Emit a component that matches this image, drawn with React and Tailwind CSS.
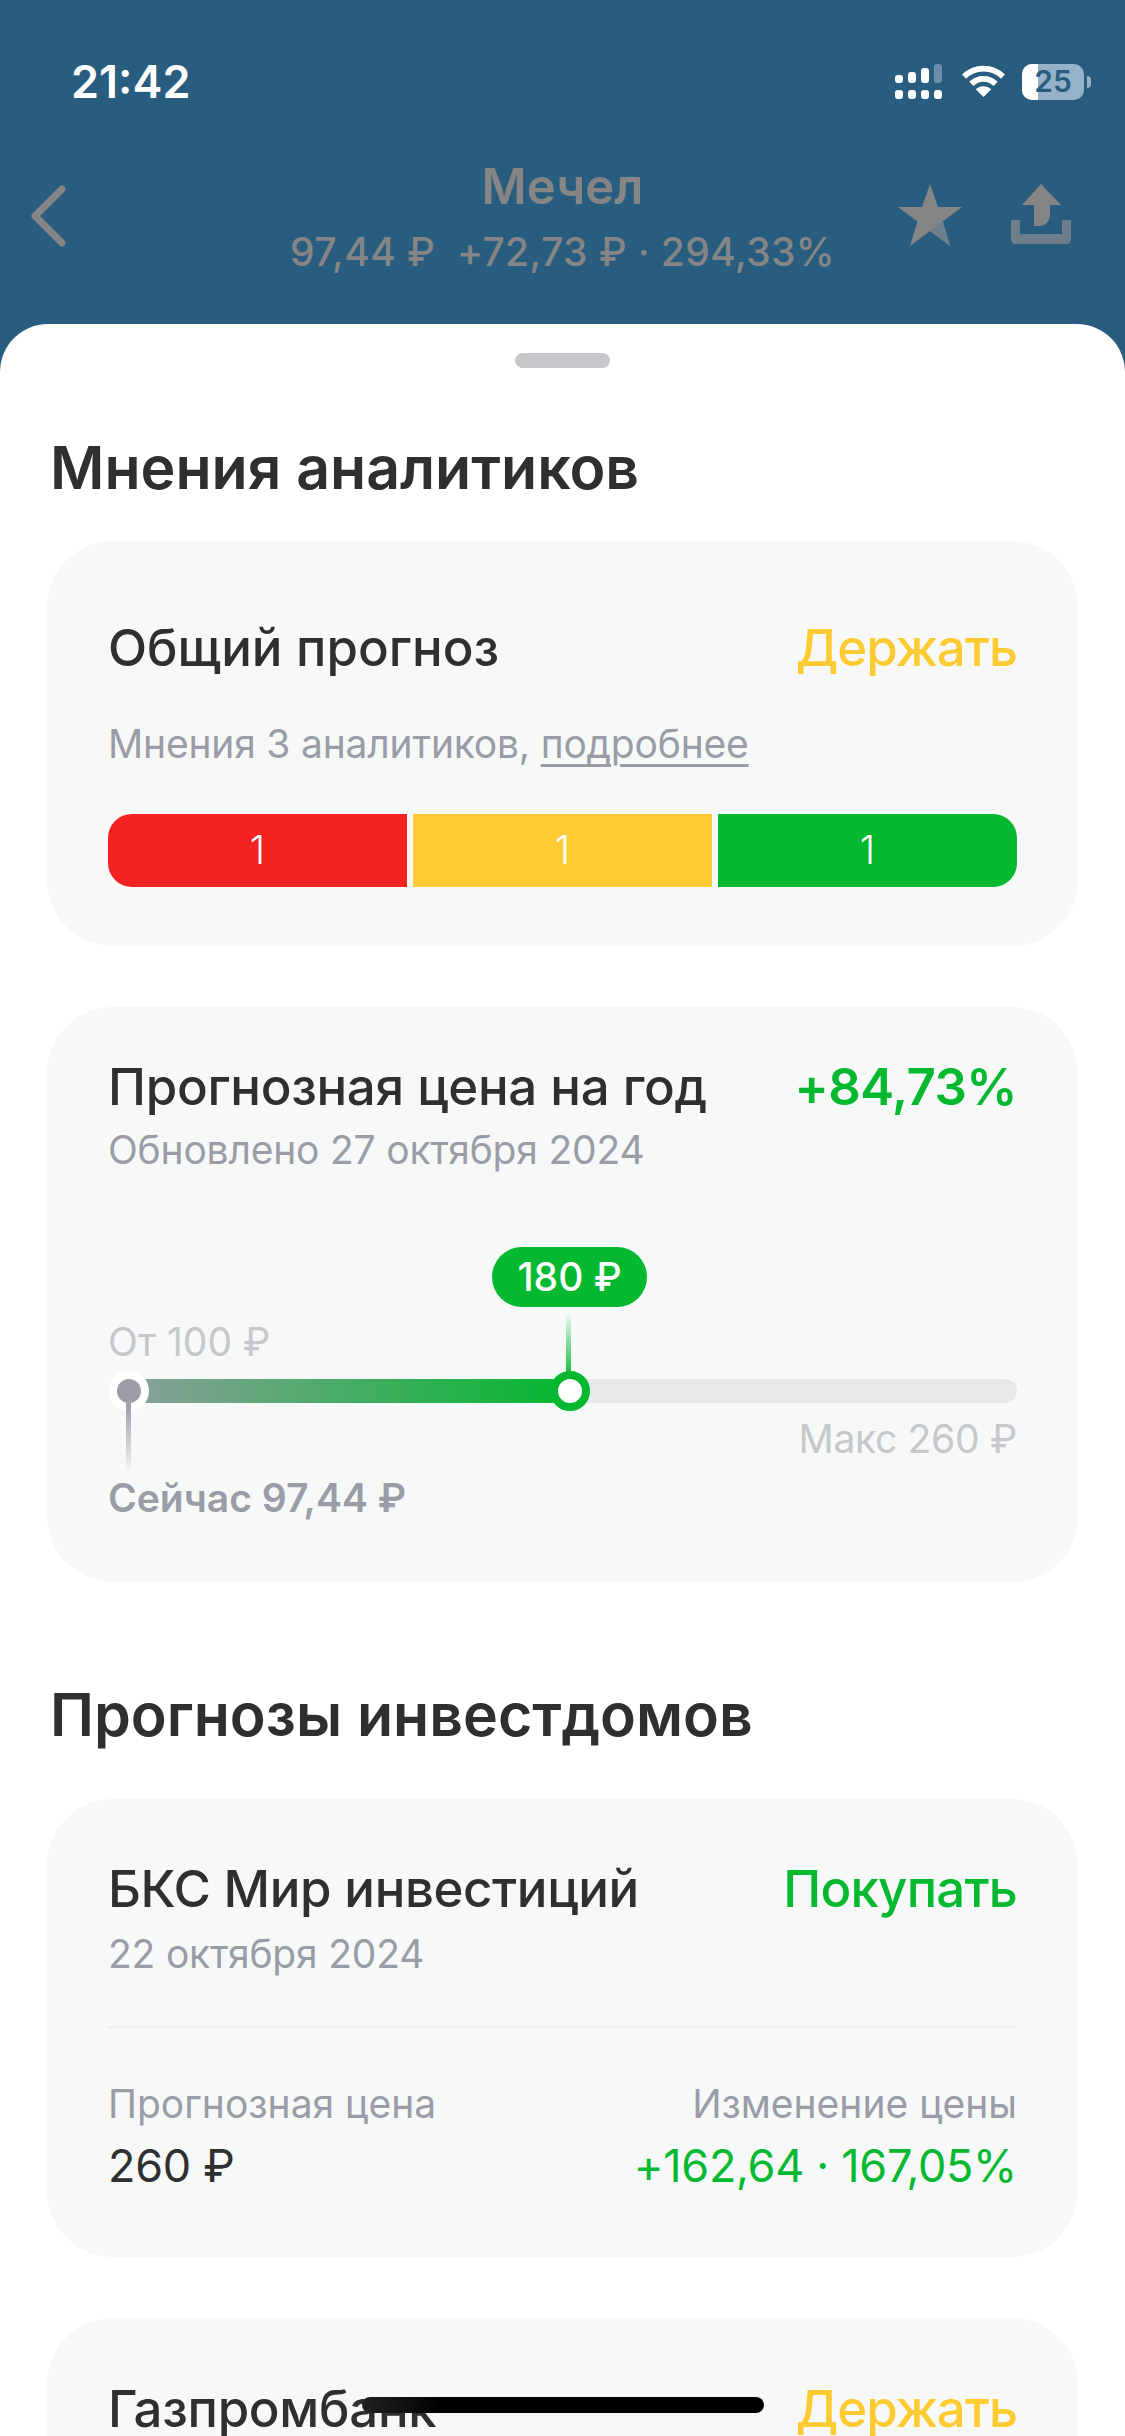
export default function App() {
  return (
    <div className="relative h-[2436px] w-[1125px] overflow-hidden bg-[#295d7f] font-['Inter',sans-serif] text-[#2f2f2f]">
      <StatusBar />
      <NavBar />
      <div className="h-[2112px] rounded-t-[48px] bg-white px-[47px]">
        <div className="flex justify-center pt-[29px]">
          <div className="h-[15px] w-[95px] rounded-full bg-[#c6c8cc]" />
        </div>
        <h1 className="mt-[67px] pl-[3px] text-[59px] leading-[66px] font-semibold">Мнения аналитиков</h1>
        <ForecastCard />
        <PriceCard />
        <h1 className="mt-[100px] pl-[3px] text-[59px] leading-[66px] font-semibold">Прогнозы инвестдомов</h1>
        <BrokerCard />
        <div className="mt-[61px] flex h-[300px] items-start justify-between rounded-[66px] bg-[#f7f9f9] pt-[62px] pr-[61px] pl-[61px] text-[51px] leading-[58px] font-medium tracking-[-0.3px]">
          <span>Газпромбанк</span>
          <span className="tracking-[-1px] text-[#ffcb33]">Держать</span>
        </div>
      </div>
      <div className="absolute top-[2397px] left-[362px] h-[16px] w-[402px] rounded-full bg-[linear-gradient(90deg,#222_0%,#000_20%)]" />
    </div>
  )
}

function StatusBar() {
  return (
    <div className="flex h-[135px] items-center justify-between pt-[28px] pr-[34px] pl-[71px] text-white">
      <span className="text-[45px] font-semibold">21:42</span>
      <div className="flex items-center">
        <svg width="47" height="35" viewBox="0 0 47 35" fill="white" className="mr-[19px]">
          <rect x="0" y="11" width="8" height="8" rx="3" />
          <rect x="13" y="8" width="8" height="11" rx="3" />
          <rect x="26" y="4" width="8" height="15" rx="3" />
          <rect x="39" y="0" width="8" height="19" rx="3" fill="#6d8ea8" />
          <rect x="0" y="26" width="8" height="9" rx="3" />
          <rect x="13" y="26" width="8" height="9" rx="3" />
          <rect x="26" y="26" width="8" height="9" rx="3" />
          <rect x="39" y="26" width="8" height="9" rx="3" />
        </svg>
        <svg width="45" height="33" viewBox="0 0 46 34" fill="none" stroke="white" strokeWidth="6" className="mr-[16px]">
          <path d="M3 12C14 1 32 1 43 12" />
          <path d="M10.5 19.5C17.5 12.5 28.5 12.5 35.5 19.5" />
          <path d="M23 33L15 25C20 21 26 21 31 25Z" fill="white" stroke="none" />
        </svg>
        <div className="flex items-center gap-[3px]">
          <div className="relative h-[36px] w-[62px] overflow-hidden rounded-[10px] bg-[#96b2c8]">
            <div className="h-full w-[16px] bg-white" />
            <span className="absolute inset-0 flex items-center justify-center text-[30px] font-semibold text-[#295d7f]">25</span>
          </div>
          <div className="h-[12px] w-[4px] rounded-r-full bg-[#96b2c8]" />
        </div>
      </div>
    </div>
  )
}

function NavBar() {
  return (
    <div className="relative flex h-[189px] items-start justify-between pt-[39px] pr-[54px] pl-[30px] text-[#858585]">
      <svg width="36" height="62" viewBox="0 0 36 62" fill="none" stroke="#858585" strokeWidth="7" strokeLinecap="round" strokeLinejoin="round" className="mt-[11px]">
        <path d="M32 4L5 31L32 58" />
      </svg>
      <div className="absolute inset-x-0 top-[23px] flex flex-col items-center">
        <span className="text-[49px] leading-[58px] font-semibold">Мечел</span>
        <span className="mt-[14px] text-[39px] leading-[44px] font-medium tracking-[0.4px] whitespace-pre">97,44 ₽  +72,73 ₽ · 294,33%</span>
      </div>
      <div className="mt-[10px] flex items-start gap-[48px]">
        <svg width="66" height="63" viewBox="0 0 66 63">
          <path d="M33 0L41 23H65L45.500 37.500L53 62L33 47L13 62L20.500 37.500L1 23H25Z" fill="#858585" />
          <path d="M33 47L46 37L53 62Z" fill="#6f7e8b" />
        </svg>
        <svg width="60" height="60" viewBox="0 0 60 60">
          <path d="M0 36H9V50H51V36H60V55C60 58 58 60 55 60H5C2 60 0 58 0 55Z" fill="#6f7e8b" />
          <path d="M30 0L50 21H39V30C39 38 34 42 28 42H23V21H11Z" fill="#858585" />
        </svg>
      </div>
    </div>
  )
}

function ForecastCard() {
  return (
    <div className="mt-[40px] h-[405px] rounded-[66px] bg-[#f7f9f9] pt-[78px] pr-[61px] pl-[61px]">
      <div className="flex items-center justify-between text-[51px] leading-[58px] font-medium">
        <span>Общий прогноз</span>
        <span className="tracking-[-1px] text-[#ffcb33]">Держать</span>
      </div>
      <p className="mt-[45px] text-[39px] leading-[44px] tracking-[-0.2px] text-[#9a9da6]">
        Мнения 3 аналитиков, <span className="underline decoration-[3px] underline-offset-[6px]">подробнее</span>
      </p>
      <div className="mt-[48px] flex h-[73px] gap-[6px] overflow-hidden rounded-[24px] text-[39px] font-light text-white">
        <div className="flex flex-1 items-center justify-center bg-[#f52222]">1</div>
        <div className="flex flex-1 items-center justify-center bg-[#ffcb33]">1</div>
        <div className="flex flex-1 items-center justify-center bg-[#04b830]">1</div>
      </div>
    </div>
  )
}

function PriceCard() {
  return (
    <div className="mt-[61px] h-[575px] rounded-[66px] bg-[#f7f9f9] pt-[51px] pr-[61px] pl-[61px]">
      <div className="flex items-center justify-between text-[51px] leading-[58px] font-medium tracking-[-0.3px]">
        <span>Прогнозная цена на год</span>
        <span className="font-semibold tracking-[-0.6px] text-[#04b830]">+84,73%</span>
      </div>
      <p className="mt-[12px] text-[39px] leading-[44px] tracking-[-0.2px] text-[#9a9da6]">Обновлено 27 октября 2024</p>
      <div className="relative mt-[207px] h-[24px]">
        <div className="absolute inset-y-0 right-0 left-[37px] rounded-r-full bg-[#e8e9eb]" />
        <div className="absolute inset-y-0 left-[37px] w-[423px] bg-[linear-gradient(90deg,#85a096_0%,#04b830_100%)]" />
        <div className="absolute top-0 left-[9px] h-[24px] w-[24px] rounded-full bg-[#9a9da6] ring-[8px] ring-white" />
        <div className="absolute top-[24px] left-[18px] h-[72px] w-[5px] bg-[linear-gradient(180deg,#9a9da6,#f7f9f9)]" />
        <div className="absolute top-[-67px] left-[458px] h-[67px] w-[5px] bg-[linear-gradient(0deg,#04b830,#f7f9f9)]" />
        <div className="absolute top-[-8px] left-[442px] h-[40px] w-[40px] rounded-full border-[8px] border-[#04b830] bg-white" />
        <div className="absolute top-[-132px] left-[384px] flex h-[60px] w-[155px] items-center justify-center rounded-full bg-[#04b830] text-[39px] font-medium text-white">180 ₽</div>
        <span className="absolute top-[-59px] left-0 text-[39px] leading-[44px] text-[#c6c8cc]">От 100 ₽</span>
        <span className="absolute top-[38px] right-0 text-[39px] leading-[44px] tracking-[-0.3px] text-[#c6c8cc]">Макс 260 ₽</span>
        <span className="absolute top-[97px] left-0 text-[39px] leading-[44px] font-semibold text-[#9a9da6]">Сейчас 97,44 ₽</span>
      </div>
    </div>
  )
}

function BrokerCard() {
  return (
    <div className="mt-[51px] h-[458px] rounded-[66px] bg-[#f7f9f9] pt-[61px] pr-[61px] pl-[61px]">
      <div className="flex items-center justify-between text-[51px] leading-[58px] font-medium tracking-[-0.4px]">
        <span>БКС Мир инвестиций</span>
        <span className="tracking-[-0.8px] text-[#04b830]">Покупать</span>
      </div>
      <p className="mt-[14px] text-[39px] leading-[44px] tracking-[-0.2px] text-[#9a9da6]">22 октября 2024</p>
      <div className="mt-[50px] h-[2px] bg-[#edeff0]" />
      <div className="mt-[54px] flex justify-between text-[39px] leading-[44px] text-[#9a9da6]">
        <span>Прогнозная цена</span>
        <span>Изменение цены</span>
      </div>
      <div className="mt-[15px] flex justify-between text-[45px] leading-[50px] tracking-[-0.3px]">
        <span>260 ₽</span>
        <span className="text-[#04b830]">+162,64 · 167,05%</span>
      </div>
    </div>
  )
}
